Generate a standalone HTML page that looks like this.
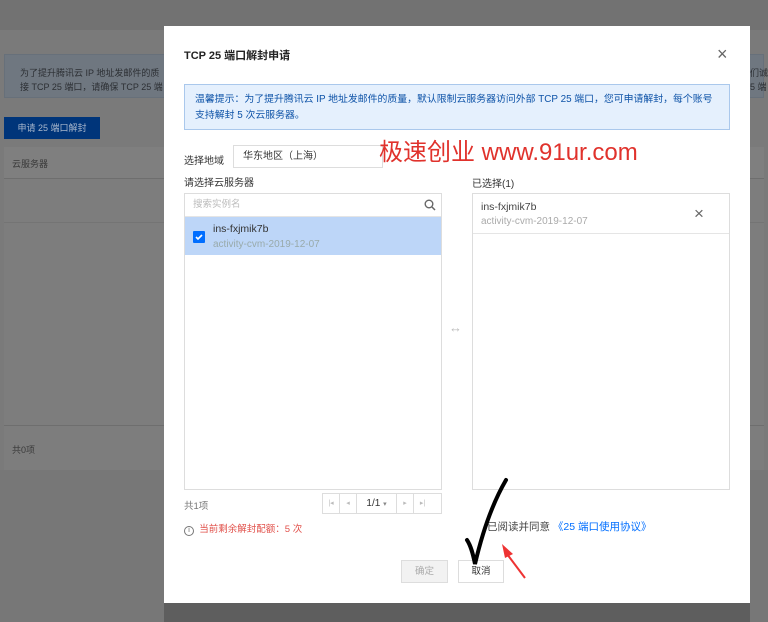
<!DOCTYPE html>
<html><head><meta charset="utf-8"><style>
*{box-sizing:border-box;margin:0;padding:0}
body{width:768px;height:622px;overflow:hidden;background:#777;font-family:"Liberation Sans","Noto Sans CJK SC",sans-serif;font-size:10px;color:#333;position:relative}
.a{position:absolute}
</style></head><body>
<div class="a" style="left:0;top:0;width:768px;height:30px;background:#727272"></div>
<div class="a" style="left:0;top:30px;width:768px;height:440px;background:#7a7a7a"></div>
<div class="a" style="left:4px;top:54px;width:760px;height:44px;background:#6f7780;border:1px solid #67707a"></div>
<div class="a" style="left:20px;top:66px;color:#2c2f33;font-size:9px;line-height:14px">为了提升腾讯云 IP 地址发邮件的质<br>接 TCP 25 端口，请确保 TCP 25 端</div>
<div class="a" style="left:750px;top:66px;color:#2c2f33;font-size:9px;line-height:14px">们诚<br>5 端</div>
<div class="a" style="left:4px;top:117px;width:96px;height:22px;background:#00357a;color:#a8b7cc;font-size:9px;line-height:22px;text-align:center">申请 25 端口解封</div>
<div class="a" style="left:4px;top:147px;width:760px;height:32px;background:#7f7f7f;border-bottom:1px solid #6e6e6e"></div>
<div class="a" style="left:12px;top:157px;color:#3a3a3a;font-size:9px">云服务器</div>
<div class="a" style="left:4px;top:179px;width:760px;height:247px;background:#7d7d7d;border-bottom:1px solid #6e6e6e"></div>
<div class="a" style="left:4px;top:222px;width:760px;height:1px;background:#747474"></div>
<div class="a" style="left:4px;top:426px;width:760px;height:44px;background:#7d7d7d"></div>
<div class="a" style="left:12px;top:443px;color:#3a3a3a;font-size:9px">共0项</div>
<div class="a" style="left:164px;top:602px;width:586px;height:20px;background:#5e5e5e"></div>

<div class="a" style="left:164px;top:26px;width:586px;height:577px;background:#fff">
  <div class="a" style="left:20px;top:21px;font-size:11px;font-weight:bold;color:#222">TCP 25 端口解封申请</div>
  <div class="a" style="left:553px;top:18px;font-size:18px;color:#666;line-height:20px">×</div>
  <div class="a" style="left:20px;top:58px;width:546px;height:46px;background:#e5f0fd;border:1px solid #aac8ec;padding:7px 10px;font-size:9.9px;line-height:16px;color:#0e53a8">温馨提示：为了提升腾讯云 IP 地址发邮件的质量，默认限制云服务器访问外部 TCP 25 端口，您可申请解封，每个账号支持解封 5 次云服务器。</div>
  <div class="a" style="left:20px;top:126px;font-size:10px;color:#333">选择地域</div>
  <div class="a" style="left:69px;top:119px;width:150px;height:23px;border:1px solid #ddd;padding-left:9px;line-height:21px;font-size:10px">华东地区（上海）</div>
  <div class="a" style="left:215px;top:113px;font-size:24px;color:#e0322c;line-height:28px">极速创业 www.91ur.com</div>
  <div class="a" style="left:20px;top:148px;font-size:10px">请选择云服务器</div>
  <div class="a" style="left:308px;top:149px;font-size:10px">已选择(1)</div>
  <div class="a" style="left:20px;top:167px;width:258px;height:297px;border:1px solid #ddd">
    <div style="height:23px;border-bottom:1px solid #e5e5e5;padding-left:8px;line-height:22px;color:#bbb;font-size:9.5px;position:relative">搜索实例名
      <svg class="a" style="right:5px;top:5px" width="12" height="12" viewBox="0 0 12 12"><circle cx="5" cy="5" r="3.8" fill="none" stroke="#666" stroke-width="1.4"/><path d="M8 8l3 3" stroke="#666" stroke-width="1.5"/></svg></div>
    <div style="height:38px;background:#bdd6f8;position:relative">
      <div class="a" style="left:8px;top:14px;width:12px;height:12px;background:#006eff;border-radius:1px"><svg width="12" height="12" viewBox="0 0 12 12"><path d="M3 6l2 2 4-4" stroke="#fff" stroke-width="1.6" fill="none"/></svg></div>
      <div class="a" style="left:28px;top:6px;font-size:10.5px;color:#333">ins-fxjmik7b</div>
      <div class="a" style="left:28px;top:22px;font-size:10px;color:#9aa">activity-cvm-2019-12-07</div>
    </div>
  </div>
  <div class="a" style="left:285px;top:294px;color:#bbb;font-size:13px">↔</div>
  <div class="a" style="left:308px;top:167px;width:258px;height:297px;border:1px solid #ddd">
    <div style="height:40px;border-bottom:1px solid #e5e5e5;position:relative">
      <div class="a" style="left:8px;top:7px;font-size:10.5px;color:#444">ins-fxjmik7b</div>
      <div class="a" style="left:8px;top:22px;font-size:10px;color:#aaa">activity-cvm-2019-12-07</div>
      <div class="a" style="left:221px;top:10px;font-size:17px;color:#666">×</div>
    </div>
  </div>
  <div class="a" style="left:20px;top:472px;font-size:9.5px;color:#777">共1项</div>
  <div class="a" style="left:158px;top:467px;width:120px;height:21px;border:1px solid #ddd;display:flex;font-size:7px;color:#bbb;line-height:19px;text-align:center">
    <div style="width:17px;border-right:1px solid #ddd">|◂</div><div style="width:17px;border-right:1px solid #ddd">◂</div><div style="width:40px;border-right:1px solid #ddd;color:#333;font-size:10px">1/1 <span style="font-size:7px;color:#888">▾</span></div><div style="width:17px;border-right:1px solid #ddd">▸</div><div style="width:17px">▸|</div>
  </div>
  <div class="a" style="left:20px;top:495px;font-size:9.5px;color:#e1504a"><span style="color:#666;border:1px solid #777;border-radius:50%;display:inline-block;width:10px;height:10px;font-size:7px;line-height:8px;text-align:center">i</span>&nbsp; 当前剩余解封配额：5 次</div>
  <div class="a" style="left:323px;top:493px;font-size:10.5px;color:#444">已阅读并同意 <span style="color:#006eff">《25 端口使用协议》</span></div>
  <div class="a" style="left:237px;top:534px;width:47px;height:23px;background:#f2f2f2;border:1px solid #ddd;text-align:center;line-height:21px;font-size:9.5px;color:#aaa">确定</div>
  <div class="a" style="left:294px;top:534px;width:46px;height:23px;background:#fff;border:1px solid #ddd;text-align:center;line-height:21px;font-size:9.5px;color:#333">取消</div>
  <svg class="a" style="left:290px;top:448px" width="80" height="110" viewBox="0 0 80 110"><path d="M13 66 C17 72 19 80 21 90 C28 60 38 30 52 6" stroke="#000" stroke-width="4" fill="none" stroke-linecap="round"/><path d="M71 104 L53 80" stroke="#e33" stroke-width="2"/><path d="M48 70 L59 80 L51 84Z" fill="#e33"/></svg>
</div>
</body></html>
